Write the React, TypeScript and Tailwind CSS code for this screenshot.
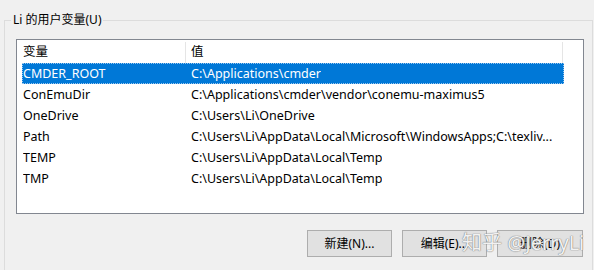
import React from "react";

type EnvVar = { name: string; value: string };

const USER_VARS: EnvVar[] = [
  { name: "CMDER_ROOT", value: "C:\\Applications\\cmder" },
  { name: "ConEmuDir", value: "C:\\Applications\\cmder\\vendor\\conemu-maximus5" },
  { name: "OneDrive", value: "C:\\Users\\Li\\OneDrive" },
  { name: "Path", value: "C:\\Users\\Li\\AppData\\Local\\Microsoft\\WindowsApps;C:\\texliv..." },
  { name: "TEMP", value: "C:\\Users\\Li\\AppData\\Local\\Temp" },
  { name: "TMP", value: "C:\\Users\\Li\\AppData\\Local\\Temp" },
];

const FONT = "font-['Noto_Sans','Noto_Sans_CJK_SC',sans-serif]";

export default function App() {
  return (
    <div className={`relative h-[270px] w-[594px] overflow-hidden bg-[#f0f0f0] text-[12px] text-black ${FONT}`}>
      <fieldset className="ml-[4px] mr-[2px] mt-[12px] h-[300px] border border-[#dcdcdc]">
        <legend className="ml-[6px] px-[2px] leading-[16px]">Li 的用户变量(U)</legend>

        <div className="pl-[11px] pr-[8px]">
          {/* list view */}
          <div className="mt-[11px] h-[175px] w-[568px] border border-[#828790] bg-white text-[12.5px]">
            <div className="flex h-[23px] items-center pt-[2px]">
              <div className="flex h-full w-[169px] items-center border-r border-[#e5e5e5] pl-[6px]">变量</div>
              <div className="flex h-full w-[377px] items-center border-r border-[#e5e5e5] pl-[5px]">值</div>
            </div>
            <div className="flex flex-col pl-[5px]">
              {USER_VARS.map((v, i) => (
                <div
                  key={v.name}
                  className={
                    i === 0
                      ? "flex h-[21px] w-[542px] items-center border border-dotted border-[#9cc7ee] bg-[#0078d7] pt-[1px] text-white"
                      : "flex h-[21px] w-[542px] items-center border border-transparent pt-[1px]"
                  }
                >
                  <span className="w-[163px] truncate">{v.name}</span>
                  <span className="truncate pl-[5px]">{v.value}</span>
                </div>
              ))}
            </div>
          </div>

          {/* buttons */}
          <div className="mr-[1px] mt-[16px] flex justify-end gap-[10px]">
            <button className="h-[27px] w-[85px] border border-[#adadad] bg-[#e1e1e1]">新建(N)...</button>
            <button className="h-[27px] w-[85px] border border-[#adadad] bg-[#e1e1e1]">编辑(E)...</button>
            <button className="h-[27px] w-[86px] border border-[#adadad] bg-[#e1e1e1]">删除(D)</button>
          </div>
        </div>
      </fieldset>

      {/* watermark */}
      <div className="pointer-events-none absolute left-[462px] top-[228px] text-[20px] text-white/90 [text-shadow:0_0_1px_#777,0_0_1px_#777]">
        知乎 @JerryLi
      </div>
    </div>
  );
}
